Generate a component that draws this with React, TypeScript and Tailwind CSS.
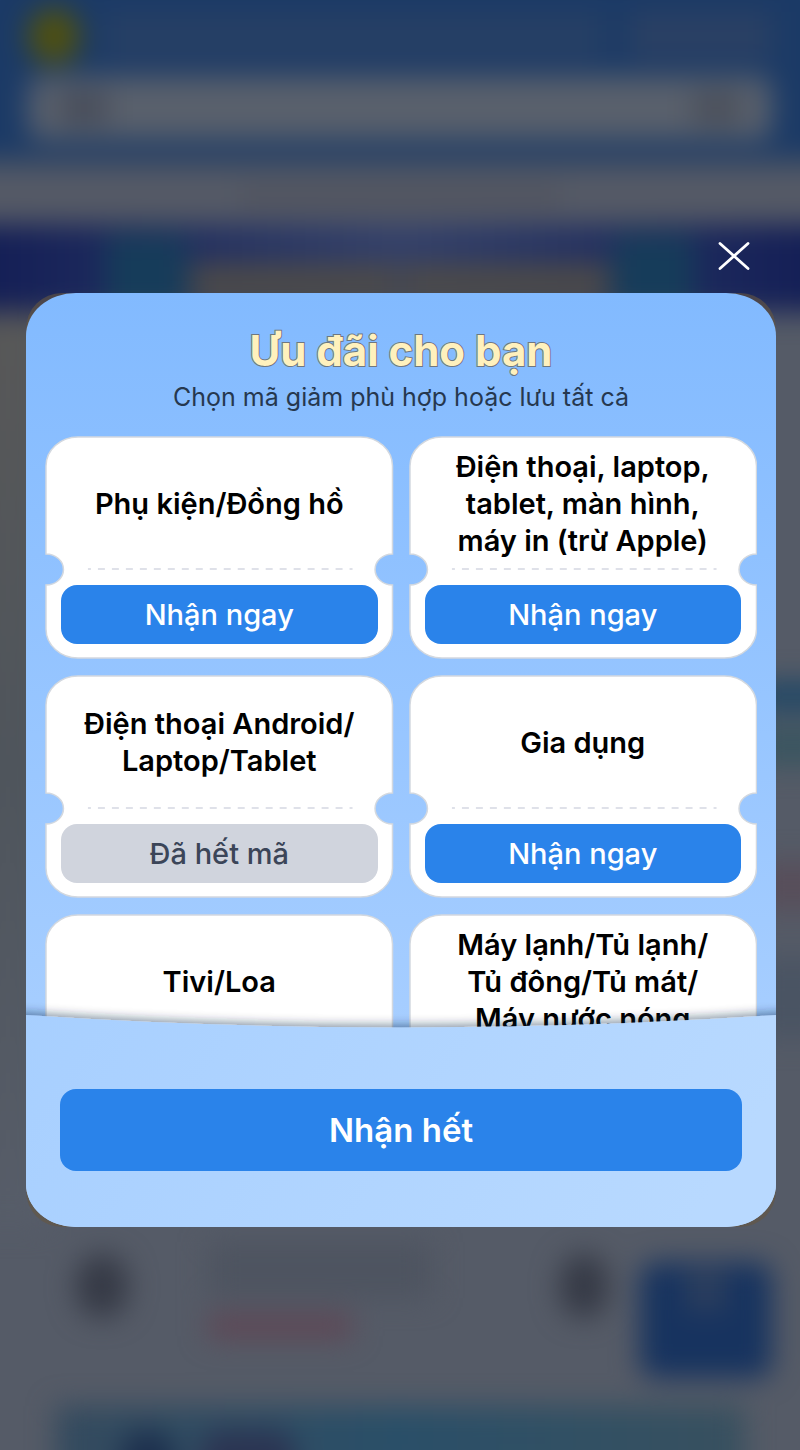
import { useState } from 'react';

interface Voucher {
  id: number;
  lines: string[];
  soldOut?: boolean;
}

const vouchers: Voucher[] = [
  { id: 1, lines: ['Phụ kiện/Đồng hồ'] },
  { id: 2, lines: ['Điện thoại, laptop,', 'tablet, màn hình,', 'máy in (trừ Apple)'] },
  { id: 3, lines: ['Điện thoại Android/', 'Laptop/Tablet'], soldOut: true },
  { id: 4, lines: ['Gia dụng'] },
  { id: 5, lines: ['Tivi/Loa'] },
  { id: 6, lines: ['Máy lạnh/Tủ lạnh/', 'Tủ đông/Tủ mát/', 'Máy nước nóng'] },
];

// Ticket outline with a notch on each side
const TicketShape = () => (
  <svg
    className="absolute inset-0 h-full w-full"
    viewBox="0 0 349 223"
    preserveAspectRatio="none"
    aria-hidden="true"
  >
    <path
      d="M33 1H316A32 29 0 0 1 348 30V118A17.500 15.500 0 0 0 348 149V193A32 29 0 0 1 316 222H33A32 29 0 0 1 1 193V149A17.500 15.500 0 0 0 1 118V30A32 29 0 0 1 33 1Z"
      fill="#ffffff"
      stroke="#d3d8df"
      strokeWidth="1.500"
    />
    <path d="M43 133H308" stroke="#d5d8e2" strokeWidth="1.500" strokeDasharray="7 7" strokeDashoffset="4" />
  </svg>
);

interface VoucherCardProps {
  voucher: Voucher;
  claimed: boolean;
  onClaim: (id: number) => void;
}

const VoucherCard = ({ voucher, claimed, onClaim }: VoucherCardProps) => {
  const disabled = voucher.soldOut || claimed;

  return (
    <li className="relative h-[223px]">
      <TicketShape />
      <div className="relative flex h-full flex-col px-4 pb-[15px]">
        <h3 className="flex flex-1 flex-col items-center justify-center text-center text-[29px] leading-[37px] font-semibold text-black">
          {voucher.lines.map((line) => (
            <span key={line} className="block whitespace-nowrap">{line}</span>
          ))}
        </h3>
        <div className="h-[15px]" />
        <button
          type="button"
          disabled={disabled}
          onClick={() => onClaim(voucher.id)}
          className={`h-[59px] w-full rounded-2xl text-[29px] leading-9 font-medium ${
            disabled ? 'bg-[#d0d4dd] text-[#3b4558]' : 'cursor-pointer bg-[#2a83ea] text-white'
          }`}
        >
          {voucher.soldOut ? 'Đã hết mã' : claimed ? 'Đã nhận' : 'Nhận ngay'}
        </button>
      </div>
    </li>
  );
};

// Shop page seen dimmed and out of focus behind the dialog
const Backdrop = () => (
  <div className="absolute inset-0 overflow-hidden bg-[#555b67]" aria-hidden="true">
    <div className="flex min-h-full flex-col blur-[14px]">
      <div className="-mx-8 -mt-8 bg-[#1b3a66] px-[60px] pt-10 pb-4">
        <div className="flex items-center gap-6">
          <div className="h-14 w-[52px] rounded-full bg-[#4f5010]" />
          <div className="h-12 flex-1 bg-[#263f65]" />
          <div className="h-12 w-36 bg-[#2a4064]" />
        </div>
        <div className="mt-3 flex h-16 items-center justify-between rounded-xl bg-[#59606c] px-8">
          <div className="h-8 w-12 bg-[#474c59]" />
          <div className="h-8 w-12 bg-[#4a4f5a]" />
        </div>
      </div>
      <div className="-mx-8 h-3 bg-[#3a4a64]" />
      <div className="-mx-8 flex h-14 items-center justify-center bg-[#555a66]">
        <div className="h-6 w-80 bg-[#51545f]" />
      </div>
      <div className="-mx-8 flex h-[88px] items-end justify-center gap-1 bg-linear-to-r from-[#131d55] via-[#33406a] to-[#131d55]">
        <div className="h-[76px] w-20 bg-[#163c5a]" />
        <div className="mb-2 h-10 w-52 bg-[#4c4a49]" />
        <div className="mb-2 h-10 w-52 bg-[#4c4a49]" />
        <div className="h-[76px] w-20 bg-[#163c5a]" />
      </div>
      <div className="-mx-8 flex h-[914px] justify-between">
        <div className="w-20 bg-linear-to-b from-[#585858] via-[#4f555c] to-[#575d69]" />
        <div className="w-20 pt-[370px]">
          <div className="h-7 bg-[#1d4666]" />
          <div className="mt-4 h-10 bg-[#3a5560]" />
          <div className="mt-24 h-12 bg-[#584e5a]" />
          <div className="mt-12 h-20 bg-[#4a5463]" />
        </div>
      </div>
      <div className="flex h-[180px] justify-between pt-4 pr-7 pl-[76px]">
        <div className="flex gap-20">
          <div className="mt-3 h-16 w-[52px] rounded-full bg-[#363a46]" />
          <div>
            <div className="h-14 w-56 bg-[#4e5460]" />
            <div className="mt-4 h-6 w-36 bg-[#5f4654]" />
          </div>
        </div>
        <div className="flex gap-8">
          <div className="mt-3 h-16 w-12 rounded-full bg-[#363a46]" />
          <div className="mt-5 flex h-[116px] w-[132px] justify-center rounded-2xl bg-[#17335f]">
            <div className="mt-2 h-10 w-10 bg-[#2d3f5e]" />
          </div>
        </div>
      </div>
      <div className="mx-14 -mb-8 flex flex-1 gap-6 bg-linear-to-r from-[#344a5e] via-[#2a4f68] to-[#38505f] pt-6 pl-16">
        <div className="h-16 w-14 rounded-full bg-[#1c2f4d]" />
        <div className="h-20 w-24 rounded-t-3xl bg-[#2b3452]" />
      </div>
    </div>
  </div>
);

const App = () => {
  const [open, setOpen] = useState(true);
  const [claimed, setClaimed] = useState<number[]>([]);

  const handleClaim = (id: number) => {
    setClaimed((prev) => [...prev, id]);
  };

  const handleClaimAll = () => {
    setClaimed(vouchers.filter((v) => !v.soldOut).map((v) => v.id));
  };

  return (
    <div className="relative min-h-screen font-['Inter','Noto_Sans',sans-serif]">
      <Backdrop />

      {open && (
        <div className="relative mx-auto max-w-[800px] pt-[235px] pr-6 pb-8 pl-[26px]">
          <div className="flex justify-end pr-5 pb-[17px]">
            <button
              type="button"
              aria-label="Đóng"
              onClick={() => setOpen(false)}
              className="flex h-[41px] w-11 cursor-pointer items-center justify-center"
            >
              <svg width="32" height="28" viewBox="0 0 32 28" fill="none" aria-hidden="true">
                <path d="M2 1.500L30 26.500M30 1.500L2 26.500" stroke="#ffffff" strokeWidth="2.800" strokeLinecap="round" />
              </svg>
            </button>
          </div>

          <div className="rounded-[36px] bg-[#655641]/60">
            <div
              role="dialog"
              aria-labelledby="voucher-title"
              className="overflow-hidden rounded-[50px/43px] bg-linear-to-b from-[#82baff] to-[#b0d3ff]"
            >
              <header className="pt-8 text-center">
                <h2
                  id="voucher-title"
                  className="text-[42px] leading-[52px] font-bold text-[#fff1bd] [paint-order:stroke_fill] [-webkit-text-stroke:2px_#6f7780]"
                >
                  Ưu đãi cho bạn
                </h2>
                <p className="mt-1 text-[25px] leading-8 text-[#26384f]">Chọn mã giảm phù hợp hoặc lưu tất cả</p>
              </header>

              {/* Voucher list */}
              <ul className="mt-[23px] grid h-[592px] grid-cols-2 content-start gap-x-[15px] gap-y-4 overflow-y-auto px-[19px] [scrollbar-width:none]">
                {vouchers.map((voucher) => (
                  <VoucherCard
                    key={voucher.id}
                    voucher={voucher}
                    claimed={claimed.includes(voucher.id)}
                    onClaim={handleClaim}
                  />
                ))}
              </ul>

              {/* Footer */}
              <footer className="relative -mt-[14px] h-[213px] px-[34px] pt-[75px]">
                <svg
                  className="absolute inset-0 h-full w-full overflow-visible"
                  viewBox="0 0 751 213"
                  preserveAspectRatio="none"
                  aria-hidden="true"
                >
                  <defs>
                    <linearGradient id="footer-fill" x1="0" y1="0" x2="1" y2="0.200">
                      <stop offset="0" stopColor="#a7cfff" />
                      <stop offset="1" stopColor="#b8d9ff" />
                    </linearGradient>
                    <filter id="footer-shadow" x="-10%" y="-20%" width="120%" height="140%">
                      <feDropShadow dx="0" dy="-3" stdDeviation="5" floodColor="#10233f" floodOpacity="0.450" />
                    </filter>
                  </defs>
                  <path
                    d="M-20 0L0 1Q375 26 751 1L771 0V240H-20Z"
                    fill="url(#footer-fill)"
                    filter="url(#footer-shadow)"
                  />
                </svg>
                <button
                  type="button"
                  onClick={handleClaimAll}
                  className="relative h-[82px] w-full cursor-pointer rounded-2xl bg-[#2a83ea] text-[33px] leading-10 font-semibold text-white"
                >
                  Nhận hết
                </button>
              </footer>
            </div>
          </div>
        </div>
      )}
    </div>
  );
};

export default App;
